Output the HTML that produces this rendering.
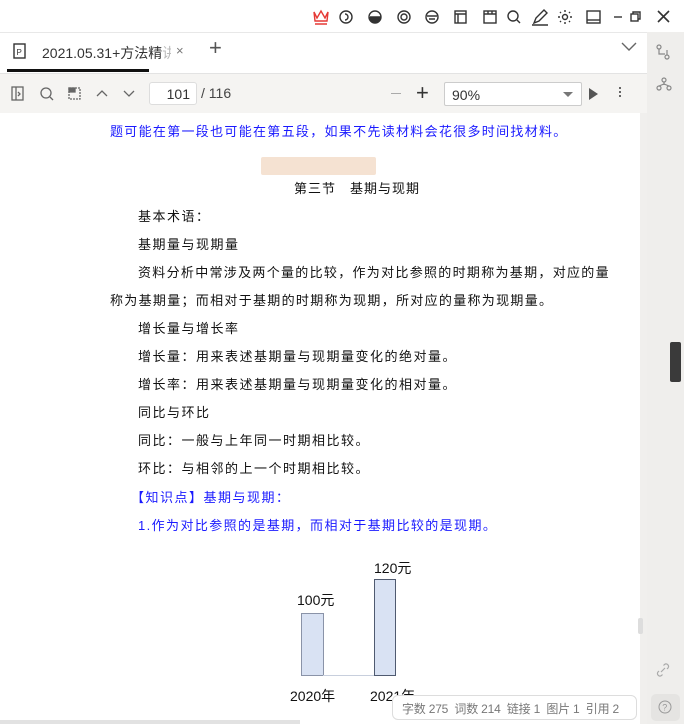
<!DOCTYPE html>
<html><head><meta charset="utf-8"><style>
*{margin:0;padding:0;box-sizing:border-box}
body{width:684px;height:724px;overflow:hidden;background:#fff;font-family:"Liberation Sans","Noto Sans CJK SC",sans-serif;position:relative}
.abs{position:absolute}
.t{position:absolute;font-size:13px;white-space:nowrap;letter-spacing:1.5px;color:#111;font-family:"Liberation Sans","Noto Sans CJK SC",sans-serif}
.b{color:#1a1aff}
</style></head><body>
<div class="abs" style="left:0;top:0;width:684px;height:32px;background:#fff"></div>
<svg class="abs" style="left:310px;top:6px" width="374" height="22" viewBox="0 0 374 22" fill="none" stroke="#333" stroke-width="1.4">
<path d="M4 6 L7 12 L11 5 L15 12 L18 6 L17 15 H5 Z M5 18 H17" stroke="#e53935"/>
<circle cx="36" cy="11" r="6"/><path d="M35 8 a3 3 0 1 1 0 6"/>
<circle cx="65" cy="11" r="6"/><path d="M60 11 H70 a5 5 0 0 1 -10 0" fill="#333"/>
<circle cx="94" cy="11" r="6"/><circle cx="94" cy="11" r="3"/>
<circle cx="122" cy="11" r="6"/><path d="M117 10 H127 M119 13 h6"/>
<rect x="145" y="5" width="11" height="12"/><path d="M145 8 H156 M148 8 V17"/>
<rect x="174" y="5" width="12" height="12"/><path d="M174 8 H186 M178 5 v3 M182 5 v3"/>
<circle cx="203" cy="10" r="5"/><path d="M207 14 l3 3"/>
<path d="M224 17 l2 -5 l8 -8 l3 3 l-8 8 z M222 19 H238"/>
<circle cx="255" cy="11" r="2.5"/><path d="M255 4 v2 M255 16 v2 M248 11 h2 M260 11 h2 M250 6 l1 1 M259 15 l1 1 M250 16 l1 -1 M259 7 l1 -1"/>
<rect x="277" y="5" width="13" height="12"/><path d="M277 14 H290"/>
<path d="M304 11 H312"/>
<rect x="321" y="8" width="7" height="7"/><path d="M323 8 V6 H330 V13 H328"/>
<path d="M348 5 l11 11 M359 5 l-11 11" stroke-width="1.6"/>
</svg>
<div class="abs" style="left:0;top:32px;width:647px;height:41px;background:#fff;border-top:1px solid #e8e8e8"></div>
<div class="abs" style="left:647px;top:32px;width:37px;height:692px;background:#efeeec"></div>
<svg class="abs" style="left:12px;top:42px" width="16" height="18"><rect x="2" y="2" width="11" height="14" fill="none" stroke="#333" stroke-width="1.4"/><text x="4.5" y="13" font-size="8" font-family="Liberation Sans" fill="#333">P</text></svg>
<div class="abs" style="left:42px;top:43px;width:129px;overflow:hidden;font-size:14px;color:#333;white-space:nowrap">2021.05.31+方法精<span style="color:#bbb">讲</span></div>
<div class="abs" style="left:176px;top:43px;font-size:13px;color:#777">×</div>
<div class="abs" style="left:7px;top:69px;width:142px;height:3px;background:#111"></div>
<div class="abs" style="left:209px;top:35px;font-size:22px;color:#555;font-weight:300">+</div>
<svg class="abs" style="left:620px;top:41px" width="18" height="12"><path d="M2 2 l7 7 l7 -7" fill="none" stroke="#666" stroke-width="1.4"/></svg>
<svg class="abs" style="left:655px;top:44px" width="18" height="50" fill="none" stroke="#888" stroke-width="1.2"><circle cx="4" cy="3" r="2"/><circle cx="12" cy="13" r="2"/><path d="M4 5 V10 h6 M12 11 V6"/><circle cx="9" cy="36" r="2"/><circle cx="4" cy="44" r="2"/><circle cx="14" cy="44" r="2"/><path d="M9 38 v3 M4 42 l5 -2 l5 2"/></svg>
<div class="abs" style="left:0;top:73px;width:647px;height:40px;background:#f5f4f2;border-top:1px solid #e3e3e3"></div>
<svg class="abs" style="left:8px;top:84px" width="140" height="20" fill="none" stroke="#666" stroke-width="1.3">
<rect x="4" y="3" width="11" height="13"/><path d="M8 3 V16 M10 8 l2 2 l-2 2"/>
<circle cx="38" cy="9" r="5"/><path d="M42 13 l3 3"/>
<rect x="61" y="4" width="11" height="11" stroke-dasharray="2 1"/><path d="M61 4 h6 v4 h-6z" fill="#666"/>
<path d="M89 12 l5 -5 l5 5 M116 7 l5 5 l5 -5"/>
</svg>
<div class="abs" style="left:149px;top:82px;width:48px;height:23px;background:#fff;border:1px solid #ddd;border-radius:3px;font-size:14px;color:#333;text-align:right;padding:3px 6px 0 0">101</div>
<div class="abs" style="left:201px;top:85px;font-size:14px;color:#444">/ 116</div>
<div class="abs" style="left:391px;top:93px;width:10px;height:1px;background:#aaa"></div>
<div class="abs" style="left:416px;top:80px;font-size:22px;color:#333">+</div>
<div class="abs" style="left:444px;top:82px;width:138px;height:24px;background:#fff;border:1px solid #ccc;border-radius:2px;font-size:14px;color:#333;padding:4px 0 0 7px">90%</div>
<svg class="abs" style="left:562px;top:91px" width="12" height="8"><path d="M1 1 h10 l-5 5z" fill="#777"/></svg>
<svg class="abs" style="left:587px;top:86px" width="12" height="16"><path d="M2 2 L11 8 L2 14z" fill="#555"/></svg>
<div class="abs" style="left:619px;top:87px;width:2px;height:2px;background:#666;box-shadow:0 4px 0 #666,0 8px 0 #666"></div>
<div class="abs" style="left:640px;top:113px;width:7px;height:611px;background:#f0efed"></div>
<div class="abs" style="left:638px;top:618px;width:5px;height:16px;background:#ddd;border-radius:2px"></div>
<div class="abs" style="left:670px;top:342px;width:11px;height:40px;background:#3a3a3a;border-radius:2px"></div>
<div class="t b" style="left:110px;top:121px;letter-spacing:1.3px">题可能在第一段也可能在第五段，如果不先读材料会花很多时间找材料。</div>
<div class="abs" style="left:261px;top:157px;width:115px;height:18px;background:#f5e2d2;border-radius:2px"></div>
<div class="t" style="left:294px;top:178px;letter-spacing:1px">第三节　基期与现期</div>
<div class="t" style="left:138px;top:206px">基本术语：</div>
<div class="t" style="left:138px;top:234px">基期量与现期量</div>
<div class="t" style="left:138px;top:262px;letter-spacing:1.3px">资料分析中常涉及两个量的比较，作为对比参照的时期称为基期，对应的量</div>
<div class="t" style="left:110px;top:290px;letter-spacing:1.3px">称为基期量；而相对于基期的时期称为现期，所对应的量称为现期量。</div>
<div class="t" style="left:138px;top:318px">增长量与增长率</div>
<div class="t" style="left:138px;top:346px">增长量：用来表述基期量与现期量变化的绝对量。</div>
<div class="t" style="left:138px;top:374px">增长率：用来表述基期量与现期量变化的相对量。</div>
<div class="t" style="left:138px;top:402px">同比与环比</div>
<div class="t" style="left:138px;top:430px">同比：一般与上年同一时期相比较。</div>
<div class="t" style="left:138px;top:458px">环比：与相邻的上一个时期相比较。</div>
<div class="t b" style="left:131px;top:487px">【知识点】基期与现期：</div>
<div class="t b" style="left:138px;top:515px;letter-spacing:1.4px">1.作为对比参照的是基期，而相对于基期比较的是现期。</div>
<div class="abs" style="left:301px;top:613px;width:23px;height:63px;background:#d9e2f3;border:1px solid #8a93a8"></div>
<div class="abs" style="left:374px;top:579px;width:22px;height:97px;background:#d9e2f3;border:1px solid #4f5a70"></div>
<div class="abs" style="left:323px;top:675px;width:51px;height:1px;background:#c8cfdd"></div>
<div class="t" style="left:297px;top:590px;letter-spacing:0;font-size:14px">100元</div>
<div class="t" style="left:374px;top:558px;letter-spacing:0;font-size:14px">120元</div>
<div class="t" style="left:290px;top:686px;letter-spacing:0;font-size:14px">2020年</div>
<div class="t" style="left:370px;top:686px;letter-spacing:0;font-size:14px">2021年</div>
<div class="abs" style="left:392px;top:695px;width:245px;height:25px;background:#fff;border:1px solid #ddd;border-radius:6px;font-size:12px;color:#777;padding:4px 0 0 9px;white-space:nowrap;letter-spacing:-0.2px">字数 275&nbsp; 词数 214&nbsp; 链接 1&nbsp; 图片 1&nbsp; 引用 2</div>
<div class="abs" style="left:651px;top:694px;width:29px;height:27px;background:#e5e4e2;border-radius:5px"></div>
<svg class="abs" style="left:657px;top:699px" width="16" height="16"><circle cx="8" cy="8" r="6" fill="none" stroke="#999"/><text x="5.3" y="11.5" font-size="9" fill="#999" font-family="Liberation Sans">?</text></svg>
<svg class="abs" style="left:655px;top:662px" width="16" height="16" fill="none" stroke="#aaa" stroke-width="1.2"><path d="M6 10 l4 -4 M4 9 l-1 1 a2.5 2.5 0 0 0 3.5 3.5 l1 -1 M12 7 l1 -1 a2.5 2.5 0 0 0 -3.5 -3.5 l-1 1"/></svg>
<div class="abs" style="left:0;top:720px;width:300px;height:4px;background:#e2e2e2"></div>
</body></html>
